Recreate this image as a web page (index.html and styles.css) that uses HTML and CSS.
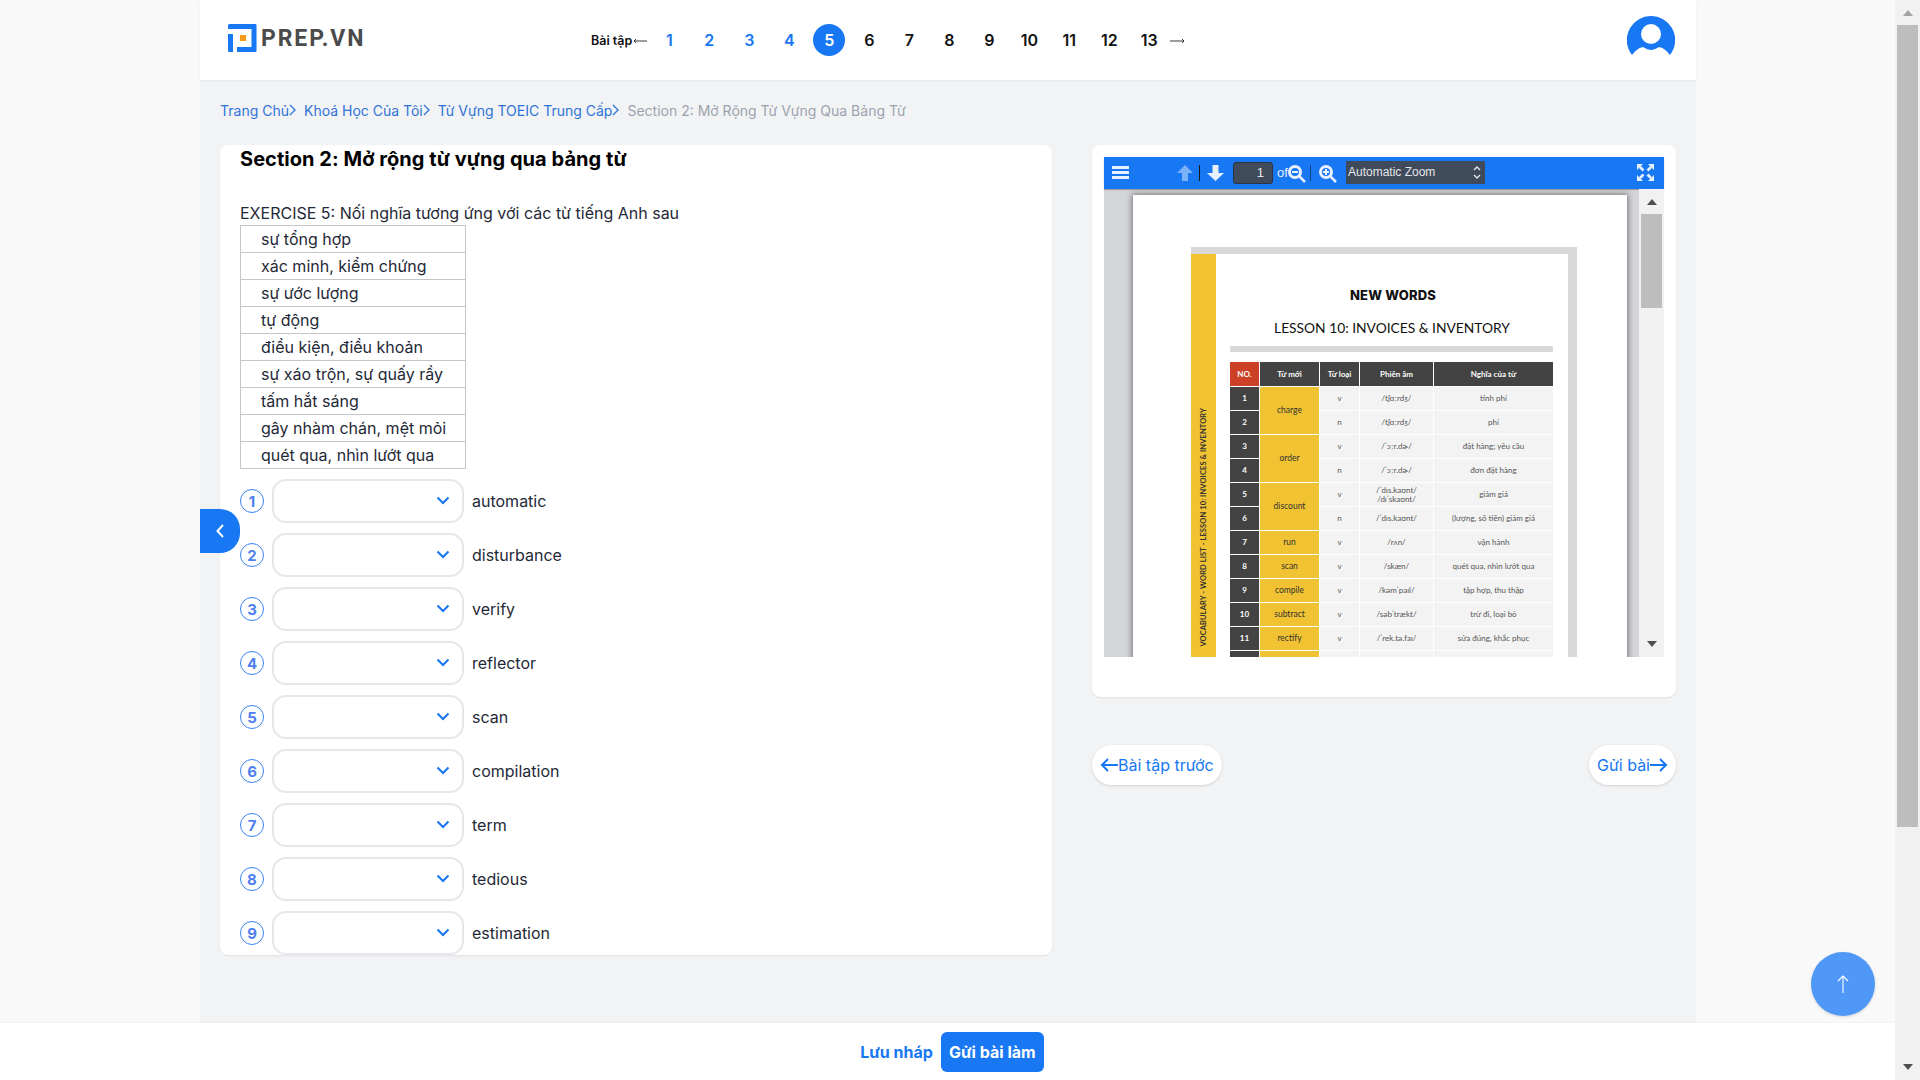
FILE: index.html
```html
<!DOCTYPE html>
<html lang="vi">
<head>
<meta charset="utf-8">
<title>PREP.VN</title>
<link rel="stylesheet" href="styles.css">
</head>
<body>
<div class="app">
  <div class="viewport">
    <div class="main">
      <div class="page">
        <header class="topbar">
          <a class="logo">
            <svg class="logo-mark" viewBox="0 0 29 28" width="29" height="28"><path d="M1.500 0h26a1 1 0 0 1 1 1v26a1 1 0 0 1-1 1H9v-5h14.500V5H0V1.500A1.500 1.500 0 0 1 1.500 0z" fill="#1877f2"/><path d="M0 10h5v18H1.500A1.500 1.500 0 0 1 0 26.500z" fill="#1877f2"/><rect x="12" y="11" width="6" height="6" fill="#f79a1c"/></svg>
            <span class="logo-text">PREP.VN</span>
          </a>
          <nav class="pager">
            <span class="pager-label">Bài tập</span>
            <svg class="pager-arrow" viewBox="0 0 14 6" width="14" height="6"><path d="M14 3H1M3 1 1 3l2 2" fill="none" stroke="#222" stroke-width=".9"/></svg>
            <ol class="pager-list">
              <li class="num done">1</li><li class="num done">2</li><li class="num done">3</li><li class="num done">4</li><li class="num current">5</li><li class="num">6</li><li class="num">7</li><li class="num">8</li><li class="num">9</li><li class="num">10</li><li class="num">11</li><li class="num">12</li><li class="num">13</li>
            </ol>
            <svg class="pager-arrow-next" viewBox="0 0 15 6" width="15" height="6"><path d="M0 3h14M12 1l2 2-2 2" fill="none" stroke="#222" stroke-width=".9"/></svg>
          </nav>
          <svg class="avatar" viewBox="0 0 48 40" width="48" height="40"><path d="M24 0a24 24 0 0 1 21 36l-2 3c-3-4-6-7-11-8-3 2-6 3-8 3s-5-1-8-3c-5 1-8 4-11 8l-2-3A24 24 0 0 1 24 0z" fill="#1877f2"/><circle cx="24" cy="18" r="10" fill="#fff"/></svg>
        </header>

        <nav class="crumbs">
          <a class="crumb">Trang Chủ</a><svg class="crumb-sep" viewBox="0 0 7 12" width="7" height="12"><path d="m1 1 5 5-5 5" fill="none" stroke="#2f74d8" stroke-width="1.300"/></svg>
          <a class="crumb">Khoá Học Của Tôi</a><svg class="crumb-sep" viewBox="0 0 7 12" width="7" height="12"><path d="m1 1 5 5-5 5" fill="none" stroke="#2f74d8" stroke-width="1.300"/></svg>
          <a class="crumb">Từ Vựng TOEIC Trung Cấp</a><svg class="crumb-sep" viewBox="0 0 7 12" width="7" height="12"><path d="m1 1 5 5-5 5" fill="none" stroke="#2f74d8" stroke-width="1.300"/></svg>
          <span class="crumb-current">Section 2: Mở Rộng Từ Vựng Qua Bảng Từ</span>
        </nav>

        <div class="content">
          <section class="card exercise">
            <h1 class="title">Section 2: Mở rộng từ vựng qua bảng từ</h1>
            <p class="prompt">EXERCISE 5: Nối nghĩa tương ứng với các từ tiếng Anh sau</p>
            <table class="options">
              <tr><td>sự tổng hợp</td></tr>
              <tr><td>xác minh, kiểm chứng</td></tr>
              <tr><td>sự ước lượng</td></tr>
              <tr><td>tự động</td></tr>
              <tr><td>điều kiện, điều khoản</td></tr>
              <tr><td>sự xáo trộn, sự quấy rầy</td></tr>
              <tr><td>tấm hắt sáng</td></tr>
              <tr><td>gây nhàm chán, mệt mỏi</td></tr>
              <tr><td>quét qua, nhìn lướt qua</td></tr>
            </table>
            <div class="questions">
              <div class="q"><span class="q-num">1</span><span class="q-select"><svg class="q-chev" viewBox="0 0 14 9" width="14" height="9"><path d="m1.500 1.500 5.500 5.500 5.500-5.500" fill="none" stroke="#1877f2" stroke-width="2"/></svg></span><span class="q-word">automatic</span></div>
              <div class="q"><span class="q-num">2</span><span class="q-select"><svg class="q-chev" viewBox="0 0 14 9" width="14" height="9"><path d="m1.500 1.500 5.500 5.500 5.500-5.500" fill="none" stroke="#1877f2" stroke-width="2"/></svg></span><span class="q-word">disturbance</span></div>
              <div class="q"><span class="q-num">3</span><span class="q-select"><svg class="q-chev" viewBox="0 0 14 9" width="14" height="9"><path d="m1.500 1.500 5.500 5.500 5.500-5.500" fill="none" stroke="#1877f2" stroke-width="2"/></svg></span><span class="q-word">verify</span></div>
              <div class="q"><span class="q-num">4</span><span class="q-select"><svg class="q-chev" viewBox="0 0 14 9" width="14" height="9"><path d="m1.500 1.500 5.500 5.500 5.500-5.500" fill="none" stroke="#1877f2" stroke-width="2"/></svg></span><span class="q-word">reflector</span></div>
              <div class="q"><span class="q-num">5</span><span class="q-select"><svg class="q-chev" viewBox="0 0 14 9" width="14" height="9"><path d="m1.500 1.500 5.500 5.500 5.500-5.500" fill="none" stroke="#1877f2" stroke-width="2"/></svg></span><span class="q-word">scan</span></div>
              <div class="q"><span class="q-num">6</span><span class="q-select"><svg class="q-chev" viewBox="0 0 14 9" width="14" height="9"><path d="m1.500 1.500 5.500 5.500 5.500-5.500" fill="none" stroke="#1877f2" stroke-width="2"/></svg></span><span class="q-word">compilation</span></div>
              <div class="q"><span class="q-num">7</span><span class="q-select"><svg class="q-chev" viewBox="0 0 14 9" width="14" height="9"><path d="m1.500 1.500 5.500 5.500 5.500-5.500" fill="none" stroke="#1877f2" stroke-width="2"/></svg></span><span class="q-word">term</span></div>
              <div class="q"><span class="q-num">8</span><span class="q-select"><svg class="q-chev" viewBox="0 0 14 9" width="14" height="9"><path d="m1.500 1.500 5.500 5.500 5.500-5.500" fill="none" stroke="#1877f2" stroke-width="2"/></svg></span><span class="q-word">tedious</span></div>
              <div class="q"><span class="q-num">9</span><span class="q-select"><svg class="q-chev" viewBox="0 0 14 9" width="14" height="9"><path d="m1.500 1.500 5.500 5.500 5.500-5.500" fill="none" stroke="#1877f2" stroke-width="2"/></svg></span><span class="q-word">estimation</span></div>
            </div>
          </section>

          <aside class="side">
            <section class="card viewer-card">
              <div class="toolbar">
                <svg class="tb-menu" viewBox="0 0 17 13" width="17" height="13"><path d="M0 0h17v3H0zM0 5h17v3H0zM0 10h17v3H0z" fill="#e6f0fe"/></svg>
                <svg class="tb-up" viewBox="0 0 16 16" width="16" height="16"><path d="M8 0l8 8h-5v8H5V8H0z" fill="#7cb2f8"/></svg>
                <span class="tb-sep"></span>
                <svg class="tb-down" viewBox="0 0 17 16" width="17" height="16"><path d="M8.500 16l8.500-8h-5.500V0h-6v8H0z" fill="#e6f0fe"/></svg>
                <span class="tb-input">1</span>
                <span class="tb-of">of</span>
                <svg class="tb-zoom" viewBox="0 0 18 18" width="18" height="18"><circle cx="7" cy="7" r="5.500" fill="#1877f2" stroke="#e6f0fe" stroke-width="3"/><path d="M4 7h6" stroke="#e6f0fe" stroke-width="2"/><path d="m11 11 6 6" stroke="#e6f0fe" stroke-width="2.500"/></svg>
                <span class="tb-sep tb-sep-2"></span>
                <svg class="tb-zoom-in" viewBox="0 0 18 18" width="18" height="18"><circle cx="7" cy="7" r="5.500" fill="#1877f2" stroke="#e6f0fe" stroke-width="3"/><path d="M4 7h6M7 4v6" stroke="#e6f0fe" stroke-width="2"/><path d="m11 11 6 6" stroke="#e6f0fe" stroke-width="2.500"/></svg>
                <span class="tb-select">Automatic Zoom<svg class="tb-updown" viewBox="0 0 8 15" width="8" height="15"><path d="m1 5 3-3 3 3M1 10l3 3 3-3" fill="none" stroke="#e6e8ec" stroke-width="1.300"/></svg></span>
                <svg class="tb-full" viewBox="0 0 17 17" width="17" height="17"><path d="M0 0h6L0 6zM17 0v6l-6-6zM0 17v-6l6 6zM17 17h-6l6-6z" fill="#e6f0fe"/><path d="m3 3 3.500 3.500M14 3l-3.500 3.500M3 14l3.500-3.500M14 14l-3.500-3.500" stroke="#e6f0fe" stroke-width="2.600"/></svg>
              </div>
              <div class="viewer">
                <div class="pdf-stage">
                  <div class="pdf-page">
                    <div class="sheet">
                      <div class="spine"><span class="spine-text">VOCABULARY - WORD LIST - LESSON 10: INVOICES &amp; INVENTORY</span></div>
                      <div class="sheet-body">
                        <div class="sheet-title">NEW WORDS</div>
                        <div class="sheet-sub">LESSON 10: INVOICES &amp; INVENTORY</div>
                        <div class="sheet-rule"></div>
                        <div class="vocab">
                          <div class="v-h v-no">NO.</div><div class="v-h">Từ mới</div><div class="v-h">Từ loại</div><div class="v-h">Phiên âm</div><div class="v-h">Nghĩa của từ</div>
                          <div class="v-n">1</div><div class="v-w v-2">charge</div><div class="v-c">v</div><div class="v-c">/tʃɑːrdʒ/</div><div class="v-c">tính phí</div>
                          <div class="v-n">2</div><div class="v-c">n</div><div class="v-c">/tʃɑːrdʒ/</div><div class="v-c">phí</div>
                          <div class="v-n">3</div><div class="v-w v-2">order</div><div class="v-c">v</div><div class="v-c">/ˈɔːr.dɚ/</div><div class="v-c">đặt hàng; yêu cầu</div>
                          <div class="v-n">4</div><div class="v-c">n</div><div class="v-c">/ˈɔːr.dɚ/</div><div class="v-c">đơn đặt hàng</div>
                          <div class="v-n">5</div><div class="v-w v-2">discount</div><div class="v-c">v</div><div class="v-c">/ˈdɪs.kaʊnt/<br>/dɪˈskaʊnt/</div><div class="v-c">giảm giá</div>
                          <div class="v-n">6</div><div class="v-c">n</div><div class="v-c">/ˈdɪs.kaʊnt/</div><div class="v-c">(lượng, số tiền) giảm giá</div>
                          <div class="v-n">7</div><div class="v-w">run</div><div class="v-c">v</div><div class="v-c">/rʌn/</div><div class="v-c">vận hành</div>
                          <div class="v-n">8</div><div class="v-w">scan</div><div class="v-c">v</div><div class="v-c">/skæn/</div><div class="v-c">quét qua, nhìn lướt qua</div>
                          <div class="v-n">9</div><div class="v-w">compile</div><div class="v-c">v</div><div class="v-c">/kəmˈpaɪl/</div><div class="v-c">tập hợp, thu thập</div>
                          <div class="v-n">10</div><div class="v-w">subtract</div><div class="v-c">v</div><div class="v-c">/səbˈtrækt/</div><div class="v-c">trừ đi, loại bỏ</div>
                          <div class="v-n">11</div><div class="v-w">rectify</div><div class="v-c">v</div><div class="v-c">/ˈrek.tə.faɪ/</div><div class="v-c">sửa đúng, khắc phục</div>
                          <div class="v-n"></div><div class="v-w"></div><div class="v-c"></div><div class="v-c"></div><div class="v-c"></div>
                        </div>
                      </div>
                    </div>
                  </div>
                </div>
                <div class="inner-scroll">
                  <span class="tri tri-up"></span>
                  <span class="inner-thumb"></span>
                  <span class="tri tri-down"></span>
                </div>
              </div>
            </section>
            <div class="step-nav">
              <a class="step"><svg viewBox="0 0 18 14" width="18" height="14"><path d="M18 7H2M8 1 2 7l6 6" fill="none" stroke="#1877f2" stroke-width="2"/></svg>Bài tập trước</a>
              <a class="step">Gửi bài<svg viewBox="0 0 18 14" width="18" height="14"><path d="M0 7h16M10 1l6 6-6 6" fill="none" stroke="#1877f2" stroke-width="2"/></svg></a>
            </div>
          </aside>
        </div>
      </div>
      <button class="side-tab"><svg viewBox="0 0 8 14" width="8" height="14"><path d="M7 1 1.500 7 7 13" fill="none" stroke="#fff" stroke-width="2"/></svg></button>
      <button class="fab"><svg viewBox="0 0 12 18" width="12" height="18"><path d="M6 18V1M1 6l5-5 5 5" fill="none" stroke="#fff" stroke-width="1.100"/></svg></button>
    </div>
    <footer class="actions">
      <a class="draft">Lưu nháp</a>
      <button class="submit">Gửi bài làm</button>
    </footer>
  </div>
  <div class="page-scroll">
    <span class="tri tri-up tri-muted"></span>
    <span class="page-thumb"></span>
    <span class="tri tri-down"></span>
  </div>
</div>
</body>
</html>
```

FILE: styles.css
```css
* { box-sizing: border-box; }
html, body { margin: 0; height: 100%; overflow: hidden; }
body { font-family: Inter, "Noto Sans", sans-serif; color: #111827; background: #f9f9f9; }
p, h1, ol { margin: 0; padding: 0; }
ol { list-style: none; }
button { border: 0; font-family: inherit; padding: 0; }

.app { display: flex; height: 1080px; }
.viewport { width: 1895px; display: flex; flex-direction: column; }
.main { position: relative; height: 1023px; overflow: hidden; }
.page { width: 1496px; height: 1023px; margin-left: 200px; background: #f2f3f5; }

.topbar { height: 80px; background: #fff; display: flex; align-items: center; padding-left: 28px; box-shadow: 0 1px 2px rgba(0,0,0,.05); position: relative; }
.logo { display: flex; align-items: center; gap: 4px; width: 363px; margin-top: -4px; }
.logo-mark { flex: none; }
.logo-text { font-family: Roboto, sans-serif; font-weight: 700; font-size: 23px; letter-spacing: 1.900px; color: #4b4b4b; }
.pager { display: flex; align-items: center; font-weight: 600; }
.pager-label { font-size: 12.500px; color: #111; }
.pager-arrow { margin-left: 1px; margin-top: 2px; }
.pager-list { display: flex; gap: 8px; margin-left: 6px; }
.num { width: 32px; height: 32px; border-radius: 50%; display: flex; align-items: center; justify-content: center; font-size: 16px; font-weight: 600; color: #111; }
.num.done { color: #1877f2; }
.num.current { background: #1877f2; color: #fff; }
.pager-arrow-next { margin-left: 5px; margin-top: 2px; }
.avatar { position: absolute; left: 1427px; top: 16px; }

.crumbs { height: 65px; padding: 0 0 5px 20px; display: flex; align-items: center; font-size: 14px; color: #2f74d8; }
.crumb-sep { margin: 0 8px 0 0; }
.crumb-current { color: #9ca3af; }

.content { display: flex; align-items: flex-start; gap: 40px; padding-left: 20px; }
.card { background: #fff; border-radius: 8px; box-shadow: 0 1px 2px rgba(0,0,0,.08); }
.exercise { width: 832px; height: 810px; padding: 0 20px; overflow: hidden; }
.title { font-size: 20px; font-weight: 700; line-height: 28px; color: #000; letter-spacing: .05px; }
.prompt { font-size: 16px; line-height: 24px; margin-top: 28px; color: #1f2937; }
.options { border-collapse: collapse; width: 226px; table-layout: fixed; }
.options td { border: 1px solid #c6c6c6; height: 27px; padding: 0 0 0 20px; font-size: 16px; line-height: 24px; color: #1f2937; white-space: nowrap; }
.questions { display: flex; flex-direction: column; gap: 10px; margin-top: 10px; }
.q { display: flex; align-items: center; height: 44px; }
.q-num { width: 24px; height: 24px; border-radius: 50%; border: 1px solid #3b82f6; display: flex; align-items: center; justify-content: center; font-size: 15px; font-weight: 700; color: #4f7fee; flex: none; margin-right: 8px; }
.q-select { width: 192px; height: 44px; border: 2px solid #e5e7eb; border-radius: 14px; background: #fff; display: flex; align-items: center; justify-content: flex-end; padding-right: 12px; flex: none; margin-right: 8px; }
.q-chev { margin-top: -2px; }
.q-word { font-size: 16px; color: #1f2937; }

.side { width: 584px; }
.viewer-card { height: 552px; padding: 12px 12px 0; }
.toolbar { height: 32px; background: #1877f2; display: flex; align-items: center; box-shadow: 0 1px 1px rgba(0,0,0,.25); position: relative; padding-bottom: 1px; }
.tb-menu { margin-left: 8px; }
.tb-up { margin-left: 48px; }
.tb-sep { width: 1px; height: 16px; background: #1a1a1a; margin-left: 6px; }
.tb-sep-2 { margin-left: 4px; background: #12407e; }
.tb-down { margin-left: 7px; }
.tb-input { width: 40px; height: 22px; background: #3f4a5a; border: 1px solid #2b3442; border-radius: 3px; margin-left: 9px; font: 13px/20px "Liberation Sans", sans-serif; color: #e5e7eb; text-align: right; padding-right: 8px; }
.tb-of { font: 13px "Liberation Sans", sans-serif; color: #e6f0fe; margin-left: 4px; width: 11px; }
.tb-zoom { margin-left: 0; margin-top: 2px; }
.tb-zoom-in { margin-left: 8px; margin-top: 2px; }
.tb-select { width: 139px; height: 23px; background: #3f4a5a; margin-left: 9px; font: 12px/23px "Liberation Sans", sans-serif; color: #e5e7eb; padding-left: 2px; display: flex; align-items: center; justify-content: space-between; padding-right: 4px; }
.tb-full { margin-left: auto; margin-right: 10px; }

.viewer { height: 468px; background: #d4d5d9; display: flex; overflow: hidden; }
.pdf-stage { flex: 1; padding: 6px 0 0 29px; overflow: hidden; }
.pdf-page { width: 494px; height: 700px; background: #fff; box-shadow: 0 0 6px 1px rgba(0,0,0,.45); padding: 52px 0 0 58px; }
.sheet { width: 386px; border-top: 7px solid #d9d9d9; border-right: 9px solid #d9d9d9; display: flex; }
.spine { width: 25px; background: #f1c232; padding-top: 154px; display: flex; justify-content: center; align-items: flex-start; }
.spine-text { writing-mode: vertical-rl; transform: rotate(180deg); font: 700 7.500px Lato, sans-serif; letter-spacing: .1px; color: #333; white-space: nowrap; }
.sheet-body { width: 352px; padding-left: 14px; font-family: Lato, sans-serif; }
.sheet-title { width: 326px; text-align: center; font: 800 13px/16px Inter, sans-serif; letter-spacing: .2px; color: #111; margin-top: 33px; }
.sheet-sub { width: 324px; text-align: center; font-size: 13.800px; line-height: 16px; color: #111; margin-top: 17px; white-space: nowrap; }
.sheet-rule { width: 323px; height: 6px; background: #d9d9d9; margin-top: 10px; }
.vocab { display: grid; grid-template-columns: 29px 59px 39px 73px 119px; grid-template-rows: 24px; grid-auto-rows: 23px; gap: 1px; margin-top: 10px; font-size: 8px; }
.vocab > div { display: flex; align-items: center; justify-content: center; text-align: center; line-height: 9px; }
.vocab .v-h { background: #434343; color: #fff; font-weight: 700; }
.vocab .v-no { background: #cc4125; }
.vocab .v-n { background: #434343; color: #fff; font-weight: 700; }
.vocab .v-w { background: #f1c232; color: #333; font-size: 8.500px; }
.vocab .v-2 { grid-row: span 2; }
.vocab .v-c { background: #f3f3f3; color: #555; }

.inner-scroll { width: 25px; background: #f1f1f1; display: flex; flex-direction: column; align-items: center; position: relative; padding-top: 25px; }
.inner-thumb { width: 21px; height: 94px; background: #bdbdbd; }
.tri { position: absolute; left: 50%; margin-left: -5px; width: 0; height: 0; border-left: 5px solid transparent; border-right: 5px solid transparent; }
.tri-up { top: 10px; border-bottom: 6px solid #505050; }
.tri-down { bottom: 10px; border-top: 6px solid #505050; }
.tri-muted { border-bottom-color: #a3a3a3; }

.step-nav { display: flex; justify-content: space-between; margin-top: 48px; }
.step { height: 40px; border-radius: 20px; background: #fff; box-shadow: 0 1px 3px rgba(0,0,0,.14); display: flex; align-items: center; padding: 0 8px; font-size: 16px; color: #1877f2; }

.side-tab { position: absolute; left: 200px; top: 509px; width: 40px; height: 44px; background: #1877f2; border-radius: 0 20px 20px 0; display: flex; align-items: center; justify-content: center; }
.fab { position: absolute; left: 1811px; top: 952px; width: 64px; height: 64px; border-radius: 50%; background: #4f98f7; box-shadow: 0 1px 3px rgba(0,0,0,.15); display: flex; align-items: center; justify-content: center; }

.actions { height: 57px; background: #fff; display: flex; align-items: center; justify-content: center; gap: 8px; padding: 0 0 0 9px; box-shadow: 0 -1px 2px rgba(0,0,0,.03); position: relative; }
.draft { font-size: 16px; font-weight: 700; color: #1877f2; }
.submit { width: 103px; height: 40px; border-radius: 6px; background: #1877f2; color: #fff; font-size: 16px; font-weight: 700; }

.page-scroll { width: 25px; background: #f1f1f1; display: flex; flex-direction: column; align-items: center; padding-top: 25px; position: relative; }
.page-thumb { width: 21px; height: 802px; background: #bdbdbd; }
```
